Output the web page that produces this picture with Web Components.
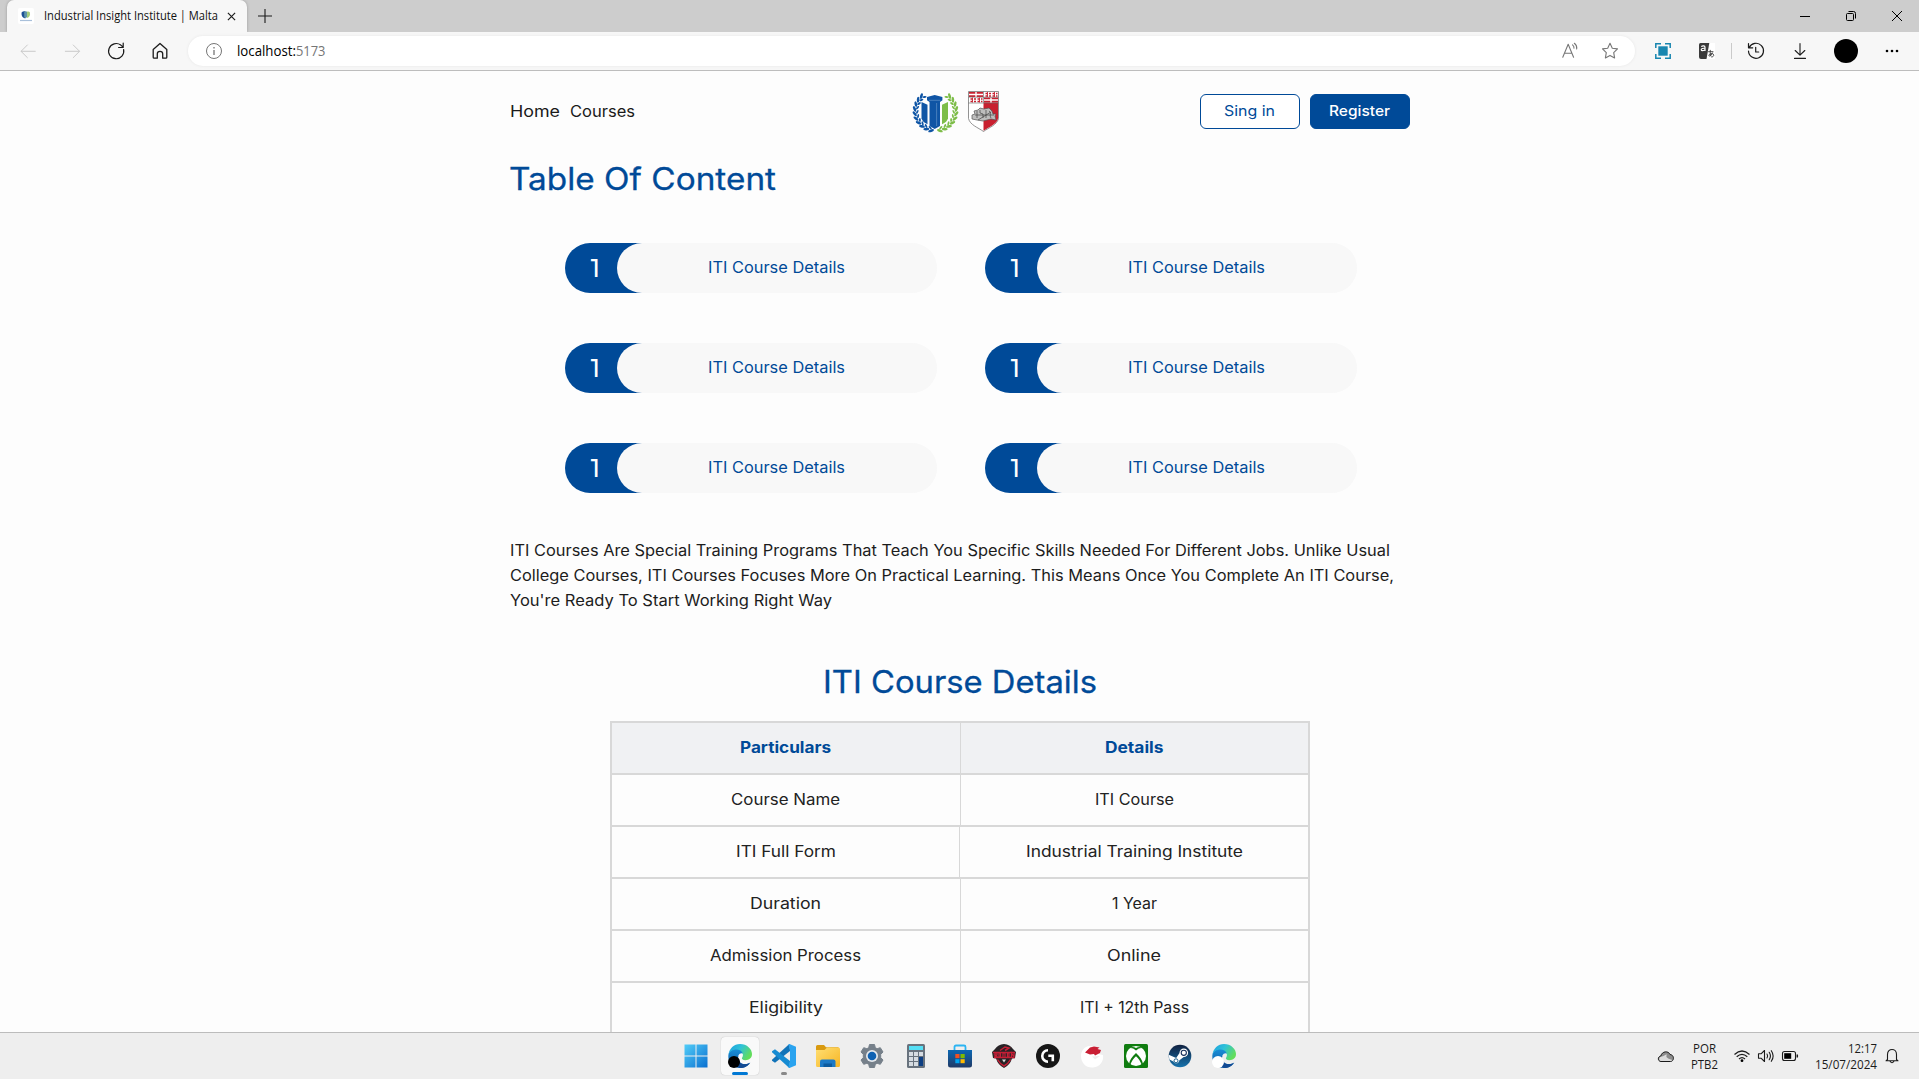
<!DOCTYPE html>
<html lang="en">
<head>
<meta charset="utf-8">
<title>Industrial Insight Institute | Malta</title>
<style>
html,body{margin:0;height:100%;overflow:hidden;background:#fdfdfd}
</style>
</head>
<body>
<desktop-screen></desktop-screen>
<script>
const define = (name, css, html, after) => customElements.define(name, class extends HTMLElement {
  connectedCallback() {
    if (this.shadowRoot) return;
    const root = this.attachShadow({ mode: 'open' });
    const markup = typeof html === 'function' ? html(this) : html;
    root.innerHTML = `<style>*{box-sizing:border-box}${css}</style>${markup}`;
    if (after) after(this, root);
  }
});

const edgeArt = (id, badge, r, bx, by) => `
<defs><linearGradient id="a${id}" x1="0" y1="0" x2="1" y2=".5"><stop offset="0" stop-color="#1b9de0"/><stop offset=".5" stop-color="#2fc2d8"/><stop offset="1" stop-color="#62dd5b"/></linearGradient>
<linearGradient id="b${id}" x1="0" y1="0" x2="0" y2="1"><stop offset="0" stop-color="#1a8fd8"/><stop offset="1" stop-color="#0c59a4"/></linearGradient></defs>
<path fill="url(#b${id})" d="M.3 12C.5 7 4.500 4.800 8.500 4.800c5 0 7 3 6.800 5-1 -1-4-1-5 2-1.500 5 3 9 8 8.200 2-.4 3-1 4-1.600C20 22.500 16 24 12 24 5 24 0 19 .3 12z"/>
<path fill="#124a93" d="M10.300 12c-1.500 5 3 9 8 8.200 1.500-.3 2.600-.9 3.600-1.500C19.500 22.500 16 24 12 24c-4.500-2-6-8-1.700-12z"/>
<path fill="url(#a${id})" d="M.4 11C1.200 4.500 6 0 12 0c7 0 12 5 12 10 0 4-3 6.200-6.500 6.200-3 0-4.300-1.200-3.300-2.600 1.700-2.300.8-8-5.700-8C4.500 5.600 1.300 7.800.4 11z"/>
<circle cx="${bx}" cy="${by}" r="${r}" fill="${badge}"/>`;

// Left half of the wreath: pairs of leaves along an arc from the bottom up to the top.
const leaves = (mirror, color) => {
  let s = '';
  const leaf = (r, deg, turn, rx, ry) => {
    const t = deg * Math.PI / 180, x = (23.500 + r * Math.cos(t)).toFixed(1), y = (22 + r * Math.sin(t) * .96).toFixed(1);
    s += `<ellipse cx="${x}" cy="${y}" rx="${rx}" ry="${ry}" transform="rotate(${deg + turn} ${x} ${y})"/>`;
  };
  for (let deg = 102; deg <= 236; deg += 14) { leaf(21, deg, 60, 3, 1.300); leaf(18.200, deg + 5, 120, 2.100, .95); }
  return `<g fill="${color}" ${mirror ? 'transform="translate(47 0) scale(-1 1)"' : ''}>${s}</g>`;
};

const line = 'fill="none" stroke-linecap="round" stroke-linejoin="round"';
const icons = {
  back: [20, 20, `<path ${line} stroke="#c6c6c6" d="M17.500 10H2.500M9 3.200L2.200 10 9 16.800"/>`],
  forward: [20, 20, `<path ${line} stroke="#c6c6c6" d="M2.500 10h15M11 3.200L17.800 10 11 16.800"/>`],
  reload: [20, 20, `<path ${line} stroke="#1b1b1b" stroke-width="1.200" d="M17.600 8.500A7.600 7.600 0 1 1 14.800 4.100L17 6M17.200 2v4.500h-4.600"/>`],
  home: [20, 20, `<path ${line} stroke="#1b1b1b" stroke-width="1.300" d="M3.200 8.500L10 2.500l6.800 6v7.800c0 .6-.3.900-.9.900h-3.200v-4.400c0-3.300-5.400-3.300-5.400 0v4.400H4.100c-.6 0-.9-.3-.9-.9z"/>`],
  info: [18, 18, `<circle cx="9" cy="9" r="7.500" fill="none" stroke="#767676"/><path stroke="#767676" stroke-width="1.300" d="M9 8v5M9 5v1.500"/>`],
  read: [20, 20, `<path ${line} stroke="#767676" d="M3.500 16L8.500 4l5 12M5 12.200h7M12.500 4.500c1.200 1 1.500 2 1.400 3.200M14.200 3c2 1.500 2.500 3.300 2.200 5.300"/>`],
  star: [20, 20, `<path ${line} stroke="#767676" stroke-width="1.100" d="M10 2.300l2.300 4.900 5.200.7-3.800 3.700.9 5.300L10 14.400l-4.600 2.500.9-5.300L2.500 7.900l5.200-.7z"/>`],
  capture: [16, 16, `<path fill="none" stroke="#1886b0" stroke-width="1.500" d="M.8 5V.8H6M10 .8h5.200V5M15.200 11v4.200H10M6 15.200H.8V11"/><path fill="#1886b0" d="M3.300 3.300h9.400v9.400H3.300z"/>`],
  translate: [16, 16, `<rect x="6" width="10" height="16" fill="#fff"/><path fill="#3b3b3b" d="M1.500 0h8.800L7.500 16H2Q0 16 0 14V1.500Q0 0 1.500 0z"/><path fill="none" stroke="#fff" stroke-width="1.200" d="M2.300 3.700C3.500 2.500 6 2.700 6 4.200V8M6 5.300c-2-.2-3.800.2-3.800 1.400S5 8.200 6 6.500"/><path ${line} stroke="#3b3b3b" stroke-width=".9" d="M9.500 8.700h4.500M11.300 7.300c-.3 3 0 4.500.6 5.700M13.400 10c-.7 2.300-3.500 4.200-3.500 2.400 0-2 4.800-2.700 4.800-.2 0 1-.8 1.700-2 1.800"/>`],
  history: [20, 20, `<path ${line} stroke="#1b1b1b" stroke-width="1.200" d="M3.200 6.600A7.500 7.500 0 1 1 2.500 10M2.500 2.600v4.200h4.200M9.700 6.300V11h3"/>`],
  download: [20, 20, `<path ${line} stroke="#1b1b1b" stroke-width="1.100" d="M10 2.500V14M5.200 9.500L10 14.200l4.800-4.700M4.500 17.400h11"/>`],
  avatar: [24, 24, `<circle cx="12" cy="12" r="12"/>`],
  more: [16, 16, `<circle cx="3" cy="8" r="1.300"/><circle cx="8" cy="8" r="1.300"/><circle cx="13" cy="8" r="1.300"/>`],
  close: [10, 10, `<path stroke="#1b1b1b" stroke-width="1.300" d="M1 1l8 8M9 1L1 9"/>`],
  plus: [14, 14, `<path stroke="#1b1b1b" stroke-width="1.100" d="M7 0v14M0 7h14"/>`],
  minimize: [10, 10, `<path stroke="#000" d="M0 5.500h10"/>`],
  restore: [10, 10, `<rect x=".5" y="2.500" width="7" height="7" rx="1" fill="none" stroke="#000"/><path fill="none" stroke="#000" d="M2.500.5H7.500Q9.500.5 9.500 2.500V7.500"/>`],
  exit: [10, 10, `<path stroke="#000" d="M0 0l10 10M10 0L0 10"/>`],
  favicon: [16, 16, `<rect width="16" height="16" rx="2" fill="#fff"/><path fill="#1b4f95" d="M7.600 10.300C4.500 10 3 7.500 3.700 4.200 5 3 6.500 3 7.600 3.500z"/><path fill="#a5cc7b" d="M9 10c2.500-.5 3.600-2.800 2.800-5.800C11 3.300 10 3.300 9 3.700z"/><path fill="#5d93a8" d="M6.200 3.500h2.800v6H6.200z"/><path stroke="#a9c0da" stroke-width="1.200" d="M2 12.500h12"/>`],
  wreath: [47, 44, `${leaves(false, '#0f55a5')}${leaves(true, '#7dbd48')}
    <path fill="#0f55a5" d="M9.500 13l6 2.800v19.500c-3.500-1.500-5.300-3.500-6-6z"/><path fill="#7dbd48" d="M36 13l-6 2.800v19.500c3.500-1.500 5.300-3.500 6-6z"/>
    <path fill="#0f55a5" d="M15 8L22.700 6l7.700 2v3.300L28 13v24L22.700 40 17.500 37V13L15 11.300z"/><path stroke="#fdfdfd" stroke-width="1.100" fill="none" d="M16.500 13.500v23M28.900 13.500v23"/><path stroke="#7fa8d6" stroke-width=".5" fill="none" d="M17 11.300h11.500M24.600 14v23"/>`],
  shield: [31, 41, `<path fill="#fff" stroke="#777" stroke-width=".8" d="M.5.5h30v27C29 34 21 36.500 15.500 40.500 10 36.500 2 34 .5 27.500z"/>
    <path fill="#c8202f" d="M15.500 12H30v15.500C29 33 21 36 15.500 39.800z"/>
    <path fill="#c8202f" d="M1 1h14v5H1zM16 6.500h14v5.200H16z"/><path fill="none" stroke="#fff" stroke-width="1.400" d="M1 3.500h14M8 1v5M16 9h14M23 6.500v5.200"/>
    <path fill="none" stroke="#c8202f" stroke-width="1.300" stroke-dasharray="2 1.500" d="M17.500 2.500h12M17.500 5h12M2.500 8h12M2.500 10.500h12"/><path fill="none" stroke="#c8202f" stroke-width=".9" d="M19.500 1v5M26.500 1v5M4.500 6.500v5M11.500 6.500v5"/>
    <path stroke="#666" stroke-width=".6" fill="none" d="M.5 6.200h30M.5 12h30M15.500.5v11.500"/>
    <path fill="#bdbdbd" stroke="#555" stroke-width=".7" d="M4 28v-4l3-1-1-3 4-1 2-2 4 1 5-1 3 3 1 3 3 0-1 2 1 4-5-1-8 2-6-1z"/><path stroke="#444" fill="none" stroke-width=".7" d="M9 20v7M12 19v3l3 1v4M18 19v8M21 20c3 2 0 4 2 7M7 24h19M10 29l13-8"/>`],
  start: [24, 24, `<defs><linearGradient id="w" x1="0" y1="0" x2="1" y2="1"><stop offset="0" stop-color="#51cdf8"/><stop offset="1" stop-color="#0a6fd0"/></linearGradient></defs><path fill="url(#w)" d="M.5.500h11v11H.5zM12.500.5h11v11h-11zM.5 12.500h11v11H.5zM12.500 12.500h11v11h-11z"/>`],
  edgeActive: [24, 24, edgeArt(1, '#000', 6, 6, 18)],
  edgeLight: [24, 24, edgeArt(2, '#fff', 6, 6, 18)],
  code: [24, 24, `<path fill="#1173b8" d="M17.500.2L18 7 3 18.700 0 16.800v-1L17 .2z"/><path fill="#168bd2" d="M17.500 23.800L18 17 3 5.300 0 7.200v1L17 23.800z"/><path fill="#2aa3ef" d="M17.500 0L24 2.800v18.400L17.500 24c-.3 0-1-.3-1-.8L18 18V6l-1.500-5.200c0-.5.700-.8 1-.8z"/>`],
  folder: [24, 24, `<defs><linearGradient id="f" x1="0" y1="0" x2="1" y2="1"><stop offset="0" stop-color="#ffdf73"/><stop offset="1" stop-color="#f7b524"/></linearGradient></defs><path fill="#d99a10" d="M0 2.500Q0 1 1.500 1H8l2 2.200h12.500V8H0z"/><path fill="url(#f)" d="M0 6h8.500L11 3.500h11.500Q24 3.500 24 5v16.500Q24 23 22.500 23h-21Q0 23 0 21.500z"/><path fill="#1c7ac7" d="M4 23v-5.500Q4 15.500 6 15.500h11.500q2 0 2 2V23z"/><path fill="#0c5b9f" d="M7.500 19.500h8.500V23H7.500z"/>`],
  gear: [24, 24, `<path fill="#76808a" d="M9.500.500h5l.8 3.200 1.800 1 3.200-1L23 8l-2.300 2.400v3.200L23 16l-2.700 4.300-3.200-1-1.800 1-.8 3.200h-5l-.8-3.200-1.800-1-3.200 1L1 16l2.300-2.400v-3.200L1 8l2.700-4.300 3.200 1 1.800-1z" stroke="#76808a" stroke-linejoin="round"/><circle cx="12" cy="12" r="6" fill="#e6e9ed"/><circle cx="12" cy="12" r="4.300" fill="#0f61b2"/>`],
  calc: [24, 24, `<rect x="3" width="18" height="24" rx="1.500" fill="#68727d"/><rect x="5" y="2" width="14" height="4" fill="#55dff5"/><path fill="#d6dce2" d="M5 8h4v4H5zM10 8h4v4h-4zM15 8h4v4h-4zM5 13h4v4H5zM10 13h4v4h-4zM5 18h4v4H5zM10 18h4v4h-4z"/><path fill="#0d3f83" d="M15 13h4v9h-4z"/>`],
  store: [24, 24, `<defs><linearGradient id="s" x1="0" y1="0" x2="0" y2="1"><stop offset="0" stop-color="#0b67b3"/><stop offset="1" stop-color="#203a66"/></linearGradient></defs><path fill="none" stroke="#2bb4f2" stroke-width="1.800" d="M6.500 7V3Q6.500 1.500 8 1.500h8Q17.500 1.500 17.500 3v4"/><path fill="url(#s)" d="M0 6h24v15q0 2.500-2.500 2.500h-19Q0 23.500 0 21z"/><path fill="#f25022" d="M7.300 10h4.200v4.200H7.300z"/><path fill="#7fba00" d="M12.500 10h4.200v4.200h-4.200z"/><path fill="#00a4ef" d="M7.300 15.200h4.200v4H7.300z"/><path fill="#ffb900" d="M12.500 15.200h4.200v4h-4.200z"/>`],
  dragon: [24, 24, `<path fill="#272326" d="M3 5Q6 .5 12 0q6 .5 9 5l3 3-1 6-3 .5Q18 21 12 24 6 21 4 14.500L1 14 0 8z"/><path fill="none" stroke="#c71f36" stroke-width="1.500" d="M8 6.500L13 3l4 1-4 2.500M1 8.500h22M2 13.500h20M5.500 15.500Q8 20 12 22q4-2 6.500-6.500"/><path fill="none" stroke="#c71f36" stroke-width="1.200" d="M3 13V9h2v2H3l2.500 2M7 9v4h1.500V9zM11 13V9h2v4M15.500 9v4H17V9zM19.500 13V9l2.500 4V9"/><path fill="#ddd" d="M10 15.500h4l-2 3z"/>`],
  logi: [24, 24, `<circle cx="12" cy="12" r="12" fill="#171717"/><path fill="none" stroke="#fff" stroke-width="2.600" d="M12 6.200a5.600 5.600 0 0 0 0 11.500M12.300 11.800h4.500v5.500"/>`],
  dragonWhite: [24, 24, `<path fill="#fff" d="M1 12C1 7 4 3 9 2l7 1 5 5-3 2 5 1c1 6-3 12-10 12.500C6 24 1 19 1 12z"/><path fill="#c91f34" d="M5 8.500L10 3.500 14 2.500l5.500 1-2 1.500 3.500 1-1 3-5 2.500-1-1.500-4 .5z"/><path fill="#eee" d="M12 12.500l8-.5-5 3.500z"/>`],
  xbox: [24, 24, `<rect width="24" height="24" rx="1.500" fill="#107c10"/><circle cx="12" cy="12" r="10" fill="#fff"/><path fill="#107c10" d="M5.500 4.200Q8.500 2 12 4q3.500-2 6.500.2-3-.7-6.500 2.300Q8.500 3.500 5.500 4.200zM12 9C8 12.500 5.500 16.500 5 20l1.200.9C7.500 17.500 9.500 14.500 12 12.300c2.500 2.200 4.500 5.200 5.800 8.600L19 20c-.5-3.500-3-7.500-7-11z"/>`],
  steam: [24, 24, `<defs><linearGradient id="t" x1="0" y1="0" x2="0" y2="1"><stop offset="0" stop-color="#10203f"/><stop offset="1" stop-color="#1673ad"/></linearGradient></defs><circle cx="12" cy="12" r="11.300" fill="url(#t)"/><path fill="#fff" d="M.7 10.800l7.500 3.100 3.300-5 4.200 4-4.300 3.300c-.3 3.500-4.600 4.300-6 1.200l-4-1.800z"/><circle cx="15.800" cy="8.800" r="4.300" fill="#fff"/><circle cx="15.800" cy="8.800" r="2.600" fill="none" stroke="#17305a" stroke-width="1.100"/><circle cx="8" cy="16.800" r="2" fill="none" stroke="#17608f"/>`],
  cloud: [18, 14, `<path fill="#8c8c8c" stroke="#1b1b1b" d="M4 12.500C.5 12.300.5 7.500 3.800 7 5 2 11.500 1.500 13 5.500c4.500.3 4.500 6.800.5 7z"/><path fill="#dcdcdc" d="M4 12c-2.500-.5-2-4 0-4.300 3-.5 4-2 6-2.200C8 8.500 11 9.500 15.500 11q-1 1-2 1z"/>`],
  wifi: [18, 14, `<path fill="none" stroke="#1b1b1b" stroke-width="1.200" d="M1.500 5.500Q9-1.500 16.500 5.500M3.700 7.800Q9 2.800 14.300 7.800M6 10q3-2.800 6 0"/><circle cx="9" cy="11.700" r="1.400"/>`],
  sound: [18, 14, `<path ${line} stroke="#1b1b1b" stroke-width="1.100" d="M1.500 4.800H4L7.500 1.500v11L4 9.200H1.500zM10 5q1.300 2 0 4M12.200 3.300q2.500 3.700 0 7.400M14.300 1.700q3.700 5.300 0 10.600"/>`],
  battery: [18, 12, `<rect x="1.500" y="1.500" width="13" height="9" rx="2" fill="none" stroke="#1b1b1b" stroke-width="1.100"/><path d="M3.200 3.200h7v5.600h-7z"/><path stroke="#1b1b1b" stroke-width="1.500" d="M16.300 4.500v3"/>`],
  bell: [14, 16, `<path ${line} stroke="#1b1b1b" stroke-width="1.100" d="M2.500 11.500V6.500C2.500-.2 11.500-.2 11.500 6.500v5l1.500 1.300H1zM5.200 13.500q1.800 2.500 3.600 0"/>`]
};

define('line-icon', `:host{display:inline-flex;flex:none;align-items:center;justify-content:center}svg{display:block;overflow:visible}`,
  el => { const [w, h, art] = icons[el.getAttribute('name')]; const s = +(el.getAttribute('scale') || 1); return `<svg width="${w * s}" height="${h * s}" viewBox="0 0 ${w} ${h}">${art}</svg>`; });

// One line of text, stretched horizontally to the width given in "w".
define('fit-text', `:host{display:inline-flex;flex:none;white-space:nowrap}span{display:block;flex:none;transform-origin:0 50%}`,
  '<span><slot></slot></span>',
  (el, root) => {
    const w = +el.getAttribute('w'), span = root.querySelector('span'), own = span.getBoundingClientRect().width;
    el.style.width = w + 'px';
    if (own) span.style.transform = `scaleX(${w / own})`;
  });

define('tab-strip', `
:host{display:flex;height:32px;background:#cdcdcd;align-items:stretch;padding-left:7px;font:12px "Open Sans","Noto Sans",sans-serif;color:#111}
.tab{width:240px;background:#f7f7f7;border-radius:7px 7px 0 0;display:flex;align-items:center;padding-left:11px;box-shadow:0 0 3px #999}
fit-text{margin-left:10px;line-height:32px}.x{width:26px}.plus{width:35px}.win{margin-left:auto;display:flex;margin-right:-1px}.win line-icon{width:46px}`,
`<div class="tab"><line-icon name="favicon"></line-icon><fit-text w="174">Industrial Insight Institute | Malta</fit-text><line-icon class="x" name="close" scale=".9"></line-icon></div>
<line-icon class="plus" name="plus"></line-icon>
<div class="win"><line-icon name="minimize"></line-icon><line-icon name="restore"></line-icon><line-icon name="exit"></line-icon></div>`);

define('tool-bar', `
:host{display:flex;height:39px;background:#f7f7f7;border-bottom:1px solid #bdbdbd;align-items:center;padding:0 5px 0 6px;position:relative;font:14px "Open Sans","Noto Sans",sans-serif}
.b{width:44px}.url{flex:1;height:30px;margin:0 6px;background:#fff;border-radius:15px;display:flex;align-items:center;box-shadow:0 0 3px #e6e6e6;padding:0 5px 0 17px}
.url fit-text{line-height:18px;padding-bottom:1px}.url fit-text:nth-of-type(1){margin-left:14px}.port{color:#767676}.read{margin-left:auto}.s{width:40px}
i{width:1px;height:16px;background:#cacaca;margin:0 2px 0 2px}`,
`<line-icon class="b" name="back" scale=".93"></line-icon><line-icon class="b" name="forward" scale=".93"></line-icon><line-icon class="b" name="reload"></line-icon><line-icon class="b" name="home"></line-icon>
<div class="url"><line-icon name="info"></line-icon><fit-text w="59">localhost:</fit-text><fit-text class="port" w="29.500">5173</fit-text><line-icon class="s read" name="read" scale="1.080"></line-icon><line-icon class="s" name="star"></line-icon></div>
<line-icon class="b" name="capture"></line-icon><line-icon class="b" name="translate"></line-icon><i></i><line-icon class="b" name="history"></line-icon><line-icon class="b" name="download"></line-icon><line-icon class="b" style="margin:0 2px" name="avatar"></line-icon><line-icon class="b" name="more"></line-icon>`);

define('site-header', `
:host{display:flex;height:80px;align-items:center;justify-content:space-between;position:relative;font:400 15.500px Inter,sans-serif;color:#1a1a1a}
nav,.actions{display:flex;gap:10px;width:300px}.actions{justify-content:flex-end;font-size:14.500px}
.logos{display:flex;gap:9px;align-items:center;margin-right:10px}
.btn{width:100px;height:35px;border:1px solid #004a98;border-radius:6px;display:flex;align-items:center;justify-content:center;color:#004a98;background:#fff;padding:0 1px 1px 0}.btn.full{background:#004a98;color:#fff;font-weight:500}`,
`<nav><fit-text w="50">Home</fit-text><fit-text w="65">Courses</fit-text></nav>
<div class="logos"><line-icon name="wreath"></line-icon><line-icon name="shield"></line-icon></div>
<div class="actions"><div class="btn"><fit-text w="51">Sing in</fit-text></div><div class="btn full"><fit-text w="61">Register</fit-text></div></div>`);

define('toc-pill', `
:host{display:flex;width:372px;height:50px;border-radius:25px;background:linear-gradient(90deg,#004a98 90px,#f8f8f8 90px);color:#004a98;font:15.500px Inter,sans-serif;overflow:hidden}
.n{width:52px;padding-left:9px;display:flex;align-items:center;justify-content:center;color:#fff;font:500 25px Montserrat,Inter,sans-serif}
.t{flex:1;border-radius:25px;background:#f8f8f8;display:flex;align-items:center;justify-content:center;padding:0 1px 1px 0}`,
`<div class="n">1</div><div class="t"><fit-text w="137">ITI Course Details</fit-text></div>`);

define('details-table', `
:host{display:block;width:700px;border:2px solid #d8d8d8;border-bottom:0;font:15.300px Inter,sans-serif;color:#222}
.r{display:flex;height:52px;border-bottom:2px solid #d8d8d8}.r>div{flex:1;display:flex;align-items:center;justify-content:center;padding-bottom:1px}.r>div+div{border-left:1px solid #d8d8d8}
.r.early>div:first-child{flex:0 0 347px;padding-left:1px}
.h{background:#f0f1f3;color:#004a98;font-weight:700}`,
  () => [['Particulars', 91, 'Details', 58.5], ['Course Name', 109, 'ITI Course', 79], ['ITI Full Form', 100, 'Industrial Training Institute', 217], ['Duration', 71, '1 Year', 45], ['Admission Process', 151, 'Online', 54], ['Eligibility', 74, 'ITI + 12th Pass', 109]]
    .map((r, i) => `<div class="r ${i ? '' : 'h'} ${i == 2 ? 'early' : ''}"><div><fit-text w="${r[1]}">${r[0]}</fit-text></div><div><fit-text w="${r[3]}">${r[2]}</fit-text></div></div>`).join(''));

define('course-page', `
:host{display:flex;flex-direction:column;align-items:center;flex:1;min-height:0;overflow:hidden;background:#fdfdfd;color:#222}
main{width:900px;flex:none;display:flex;flex-direction:column;margin-left:1px}
h1,h2{margin:0;font:400 31px/40px Inter,sans-serif;color:#004a98;display:flex;-webkit-text-stroke:.3px #004a98}h1{margin:8px 0 0 -1px}
.grid{display:grid;grid-template-columns:372px 372px;gap:50px 48px;margin:44px 0 0 55px}
p{margin:45px 0 0;font:15.200px/25px Inter,sans-serif;display:flex;flex-direction:column;color:#1c1c1c}
h2{margin-top:49px;justify-content:center}details-table{margin:19px 0 0 100px;flex:none}`,
`<main><site-header></site-header><h1><fit-text w="267">Table Of Content</fit-text></h1>
<div class="grid">${'<toc-pill></toc-pill>'.repeat(6)}</div>
<p><fit-text w="880">ITI Courses Are Special Training Programs That Teach You Specific Skills Needed For Different Jobs. Unlike Usual</fit-text><fit-text w="884">College Courses, ITI Courses Focuses More On Practical Learning. This Means Once You Complete An ITI Course,</fit-text><fit-text w="322">You're Ready To Start Working Right Way</fit-text></p>
<h2><fit-text w="274">ITI Course Details</fit-text></h2><details-table></details-table></main>`);

define('task-bar', `
:host{display:flex;flex:none;height:47px;background:#eee;border-top:1px solid #bcbcbc;font:12px/16px "Open Sans","Noto Sans",sans-serif;color:#1b1b1b}
.side{flex:1;display:flex;justify-content:flex-end;align-items:center}
.apps{display:flex;align-items:center}
.app{width:44px;height:46px;display:flex;flex-direction:column;align-items:center;justify-content:center;position:relative}
.app.on::before{content:"";position:absolute;left:3px;top:4px;width:38px;height:38px;border-radius:4px;background:#f9f9f9;box-shadow:0 0 1px #aaa}
.app line-icon{position:relative}
.app.on::after,.app.run::after{content:"";position:absolute;bottom:4px;height:3px;border-radius:2px;width:16px;background:#0078d4}.app.run::after{width:6px;background:#888}
.lang,.clock{display:flex;flex-direction:column;align-items:center;padding-top:1px}.lang{width:28px;margin:0 15px 0 15px}.clock{align-items:flex-end;margin:0 8px 0 16px}
.side line-icon+line-icon{margin-left:6px}.side{padding-right:20px}.pad{flex:none;width:674px}`,
`<div class="pad"></div><div class="apps">${['start', 'edgeActive', 'code', 'folder', 'gear', 'calc', 'store', 'dragon', 'logi', 'dragonWhite', 'xbox', 'steam', 'edgeLight'].map((n, i) => `<div class="app ${i == 1 ? 'on' : i == 2 ? 'run' : ''}"><line-icon name="${n}"></line-icon></div>`).join('')}</div>
<div class="side"><line-icon name="cloud"></line-icon><div class="lang"><fit-text w="23">POR</fit-text><fit-text w="27">PTB2</fit-text></div><line-icon name="wifi"></line-icon><line-icon name="sound"></line-icon><line-icon name="battery"></line-icon><div class="clock"><fit-text w="29">12:17</fit-text><fit-text w="62">15/07/2024</fit-text></div><line-icon name="bell"></line-icon></div>`);

define('desktop-screen', `:host{display:flex;flex-direction:column;height:100vh}tab-strip,tool-bar{flex:none}`,
`<tab-strip></tab-strip><tool-bar></tool-bar><course-page></course-page><task-bar></task-bar>`);
</script>
</body>
</html>
